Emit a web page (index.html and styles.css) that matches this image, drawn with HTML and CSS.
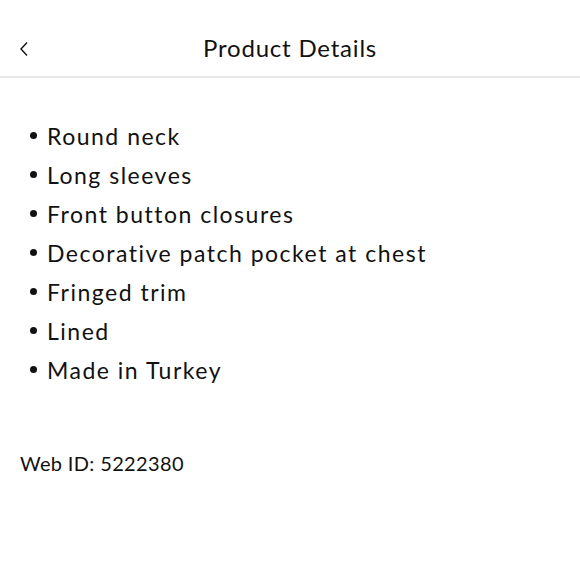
FILE: index.html
```html
<!DOCTYPE html>
<html>
<head>
<meta charset="utf-8">
<link rel="stylesheet" href="styles.css">
</head>
<body>
<header class="topbar">
  <button class="back" aria-label="Back">
    <svg width="10" height="16" viewBox="0 0 10 16"><path d="M8 1.5 L2 8 L8 14.5" fill="none" stroke="#111" stroke-width="1.4"/></svg>
  </button>
  <h1 class="title">Product Details</h1>
</header>
<main class="content">
  <ul class="features">
    <li>Round neck</li>
    <li>Long sleeves</li>
    <li>Front button closures</li>
    <li>Decorative patch pocket at chest</li>
    <li>Fringed trim</li>
    <li>Lined</li>
    <li>Made in Turkey</li>
  </ul>
  <p class="webid">Web ID: 5222380</p>
</main>
</body>
</html>
```
FILE: styles.css
```css
* { box-sizing: border-box; }
html, body { margin: 0; padding: 0; background: #fff; }
body { font-family: "Lato", "Noto Sans", sans-serif; color: #111; width: 580px; }
.topbar {
  position: relative;
  height: 78px;
  border-bottom: 2px solid #e8e8e8;
  display: flex;
  align-items: flex-start;
  justify-content: center;
}
.back {
  position: absolute;
  left: 18px;
  top: 40px;
  background: none;
  border: 0;
  padding: 0;
  width: 12px;
  height: 18px;
  display: flex;
  align-items: center;
  justify-content: center;
}
.title {
  margin: 0;
  font-size: 24px;
  font-weight: 400;
  letter-spacing: 0.8px;
  padding-top: 33px;
  line-height: 30px;
}
.content { padding: 0 20px; }
.features {
  list-style: none;
  margin: 0;
  padding: 38px 0 0 0;
}
.features li {
  display: flex;
  align-items: center;
  height: 39px;
  font-size: 23px;
  letter-spacing: 1.5px;
}
.features li::before {
  content: "";
  width: 7px;
  height: 7px;
  border-radius: 50%;
  background: #111;
  margin: 0 10px 0 10px;
  flex: none;
}
.webid {
  margin: 62px 0 0 0;
  font-size: 20px;
  letter-spacing: 0.35px;
}
```
